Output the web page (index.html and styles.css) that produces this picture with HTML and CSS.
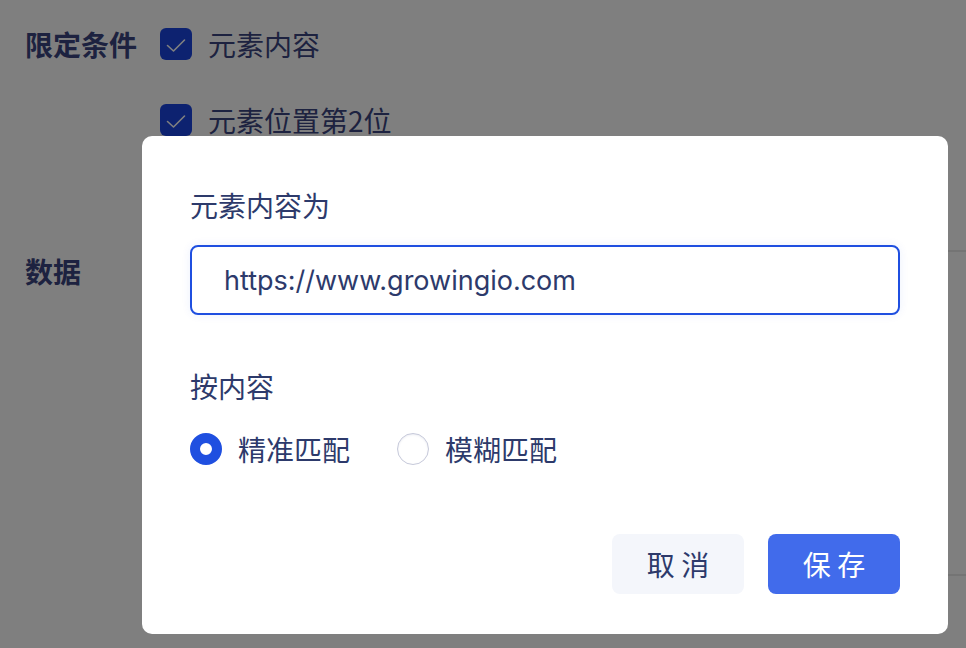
FILE: index.html
```html
<!DOCTYPE html>
<html lang="zh-CN">
<head>
<meta charset="utf-8">
<title>元素内容</title>
<link rel="stylesheet" href="styles.css">
</head>
<body>
<div class="page">
  <div class="row row-first">
    <div class="row-label">限定条件</div>
    <div class="checks">
      <label class="check"><span class="box"><svg viewBox="0 0 32 32" width="32" height="32"><path d="M7.5 17.5 L13.5 23 L24.5 12" fill="none" stroke="#fff" stroke-width="1.6" stroke-linecap="round" stroke-linejoin="round"/></svg></span><span>元素内容</span></label>
      <label class="check"><span class="box"><svg viewBox="0 0 32 32" width="32" height="32"><path d="M7.5 17.5 L13.5 23 L24.5 12" fill="none" stroke="#fff" stroke-width="1.6" stroke-linecap="round" stroke-linejoin="round"/></svg></span><span>元素位置第2位</span></label>
    </div>
  </div>
  <div class="row row-data">
    <div class="row-label">数据</div>
    <div class="data-box"></div>
  </div>
</div>
<div class="mask"></div>
<div class="modal">
  <div class="field-label">元素内容为</div>
  <div class="input">https://www.growingio.com</div>
  <div class="field-label second">按内容</div>
  <div class="radios">
    <label class="radio"><span class="dot on"></span><span>精准匹配</span></label>
    <label class="radio"><span class="dot"></span><span>模糊匹配</span></label>
  </div>
  <div class="actions">
    <button class="btn btn-cancel">取 消</button>
    <button class="btn btn-save">保 存</button>
  </div>
</div>
</body>
</html>
```
FILE: styles.css
```css
* { box-sizing: border-box; }
html, body { margin: 0; padding: 0; }
body {
  width: 966px;
  height: 648px;
  overflow: hidden;
  background: #fff;
  font-family: "Noto Sans CJK SC", "Noto Sans", sans-serif;
  color: #2d3a6b;
}
.page {
  padding: 24px 0 0 25px;
}
.row {
  display: flex;
  align-items: flex-start;
}
.row-label {
  width: 135px;
  flex: none;
  font-size: 28px;
  font-weight: 700;
  line-height: 40px;
  color: #3b4580;
}
.checks {
  display: flex;
  flex-direction: column;
  gap: 36px;
}
.check {
  display: flex;
  align-items: center;
  gap: 16px;
  font-size: 28px;
  line-height: 40px;
  color: #3b4580;
}
.box {
  width: 32px;
  height: 32px;
  border-radius: 6px;
  background: #1a44e0;
  display: block;
}
.box svg { display: block; }
.row-data {
  margin-top: 111px;
}
.data-box {
  flex: 1;
  height: 326px;
  margin-top: -1px;
  border-top: 2px solid #e8e8e8;
  border-bottom: 2px solid #e8e8e8;
}
.mask {
  position: fixed;
  inset: 0;
  background: rgba(0, 0, 0, 0.5);
}
.modal {
  position: absolute;
  left: 142px;
  top: 136px;
  width: 806px;
  height: 498px;
  background: #fff;
  border-radius: 10px;
  padding: 48px 48px 40px;
  display: flex;
  flex-direction: column;
}
.field-label {
  font-size: 28px;
  line-height: 42px;
  color: #2d3a6b;
}
.field-label.second {
  margin-top: 50px;
}
.input {
  margin-top: 19px;
  height: 70px;
  border: 2px solid #1f4fe0;
  border-radius: 8px;
  padding: 0 0 0 32px;
  display: flex;
  align-items: center;
  font-family: "Inter", "Liberation Sans", sans-serif;
  font-size: 27px;
  color: #2d3a6b;
  box-shadow: 0 0 10px rgba(31, 79, 224, 0.08);
}
.radios {
  margin-top: 22px;
  display: flex;
  align-items: center;
  gap: 47px;
  height: 40px;
}
.radio {
  display: flex;
  align-items: center;
  gap: 16px;
  font-size: 28px;
  line-height: 40px;
  color: #2d3a6b;
}
.dot {
  width: 32px;
  height: 32px;
  border-radius: 50%;
  border: 1px solid #c6c9da;
  box-shadow: inset 0 1px 2px rgba(120, 128, 170, 0.15);
  background: #fff;
  display: block;
}
.dot.on {
  border: 10px solid #1f4fe0;
  box-shadow: none;
}
.actions {
  margin-top: auto;
  display: flex;
  justify-content: flex-end;
  gap: 24px;
}
.btn {
  width: 132px;
  height: 60px;
  border: none;
  border-radius: 8px;
  font-family: "Noto Sans CJK SC", sans-serif;
  font-size: 28px;
  padding: 0;
  cursor: pointer;
}
.btn-cancel {
  background: #f4f6fb;
  color: #2d3a6b;
}
.btn-save {
  background: #416beb;
  color: #fff;
}
```
